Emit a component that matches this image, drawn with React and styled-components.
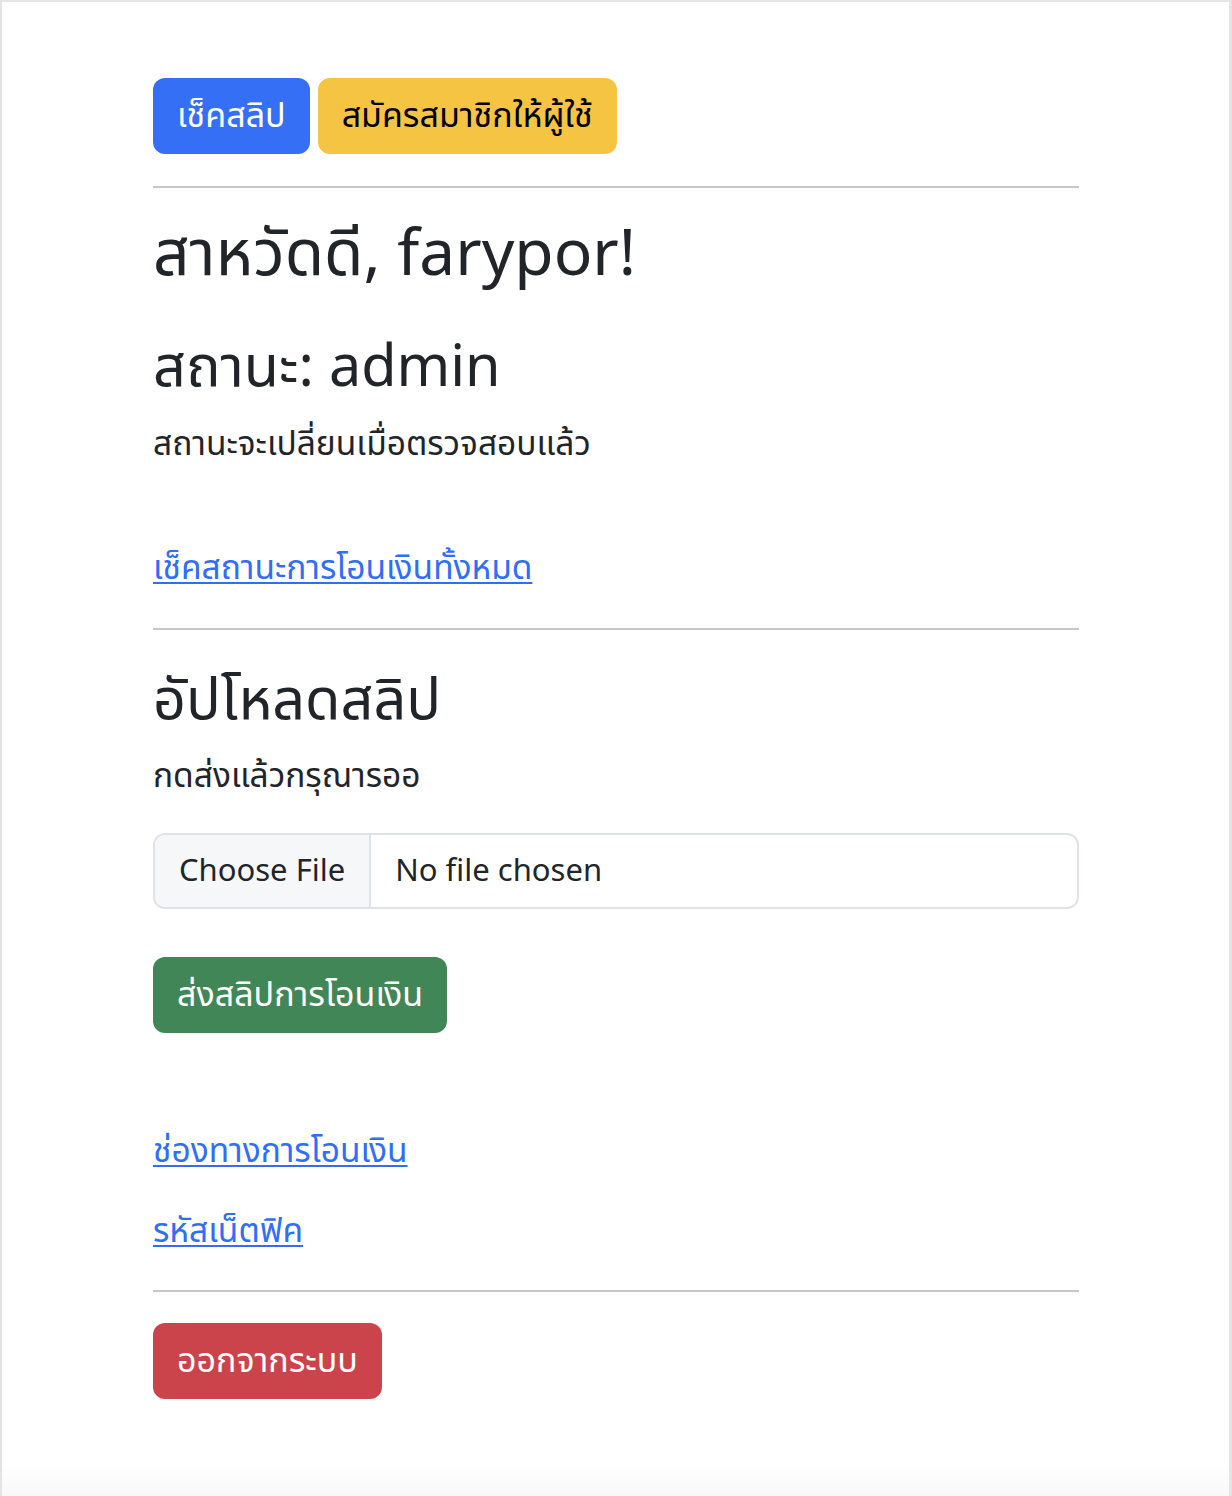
import React from "react";
import styled, { createGlobalStyle } from "styled-components";

const Global = createGlobalStyle`
  html, body { margin: 0; padding: 0; background: #ffffff; }
  body {
    font-family: "Noto Sans", "Noto Sans Thai", "Open Sans", sans-serif;
    color: #212529;
    -webkit-font-smoothing: antialiased;
  }
  * { box-sizing: border-box; }
`;

const Frame = styled.div`
  min-height: 1496px;
  border-top: 2px solid #e7e5ea;
  border-left: 2px solid #e4e4e4;
  border-right: 3px solid #e4e4e4;
  background: linear-gradient(to bottom, #ffffff 0, #ffffff 1462px, #f8f8f8 1494px);
`;

const Container = styled.main`
  width: 926px;
  padding-top: 76px;
  margin-left: 151px;
`;

const ButtonRow = styled.div`
  display: flex;
  gap: 8px;
`;

const Button = styled.a`
  display: inline-flex;
  align-items: center;
  justify-content: center;
  height: 76px;
  padding: 0 24px;
  border-radius: 12px;
  font-size: 34px;
  text-decoration: none;
  cursor: pointer;
  border: none;
  font-family: inherit;
  background: ${(p) => p.$bg};
  color: ${(p) => p.$fg || "#ffffff"};
  margin-top: ${(p) => p.$mt || "0"};
`;

const Rule = styled.hr`
  border: 0;
  height: 2px;
  background: #c8c8c9;
  margin: ${(p) => p.$m || "32px 0 0"};
`;

const Title = styled.h1`
  font-size: 64px;
  font-weight: 400;
  height: 112px;
  line-height: 126px;
  margin: 0;
`;

const Subtitle = styled.h2`
  font-size: 57.5px;
  font-weight: 400;
  height: ${(p) => p.$h};
  line-height: ${(p) => p.$lh};
  margin: 0;
`;

const Text = styled.p`
  font-size: 33.5px;
  height: ${(p) => p.$h};
  line-height: ${(p) => p.$lh};
  margin: 0;
`;

const LinkLine = styled.div`
  font-size: 33.5px;
  height: 70px;
  line-height: ${(p) => p.$lh};
  margin-top: ${(p) => p.$mt};
`;

const Link = styled.a`
  color: #2f6ef5;
  text-decoration: underline;
  text-underline-offset: 3px;
  text-decoration-thickness: 2px;
`;

const FileField = styled.label`
  display: flex;
  height: 76px;
  margin-top: 33px;
  border: 2px solid #dfe2e6;
  border-radius: 12px;
  overflow: hidden;
  font-size: 31px;
  input { display: none; }
`;

const FileButton = styled.span`
  display: flex;
  align-items: center;
  padding: 0 24px 4px;
  background: #f6f7f9;
  border-right: 2px solid #dfe2e6;
`;

const FileName = styled.span`
  display: flex;
  align-items: center;
  padding: 0 24px 4px;
`;

export default function App() {
  return (
    <>
      <Global />
      <Frame>
        <Container>
          <ButtonRow>
            <Button $bg="#346ff5">เช็คสลิป</Button>
            <Button $bg="#f6c443" $fg="#000000">สมัครสมาชิกให้ผู้ใช้</Button>
          </ButtonRow>
          <Rule />
          <Title>สาหวัดดี, farypor!</Title>
          <Subtitle $h="100px" $lh="129px">สถานะ: admin</Subtitle>
          <Text $h="70px" $lh="84px">สถานะจะเปลี่ยนเมื่อตรวจสอบแล้ว</Text>
          <LinkLine $mt="60px" $lh="72px">
            <Link href="#">เช็คสถานะการโอนเงินทั้งหมด</Link>
          </LinkLine>
          <Rule $m="28px 0 0" />
          <Subtitle $h="110px" $lh="135px">อัปโหลดสลิป</Subtitle>
          <Text $h="60px" $lh="68px">กดส่งแล้วกรุณารออ</Text>
          <FileField>
            <FileButton>Choose File</FileButton>
            <FileName>No file chosen</FileName>
            <input type="file" />
          </FileField>
          <Button $bg="#418657" $mt="48px">ส่งสลิปการโอนเงิน</Button>
          <LinkLine $mt="77px" $lh="78px">
            <Link href="#">ช่องทางการโอนเงิน</Link>
          </LinkLine>
          <LinkLine $mt="10px" $lh="78px">
            <Link href="#">รหัสเน็ตฟิค</Link>
          </LinkLine>
          <Rule $m="30px 0 0" />
          <Button $bg="#cc444b" $mt="31px">ออกจากระบบ</Button>
        </Container>
      </Frame>
    </>
  );
}
